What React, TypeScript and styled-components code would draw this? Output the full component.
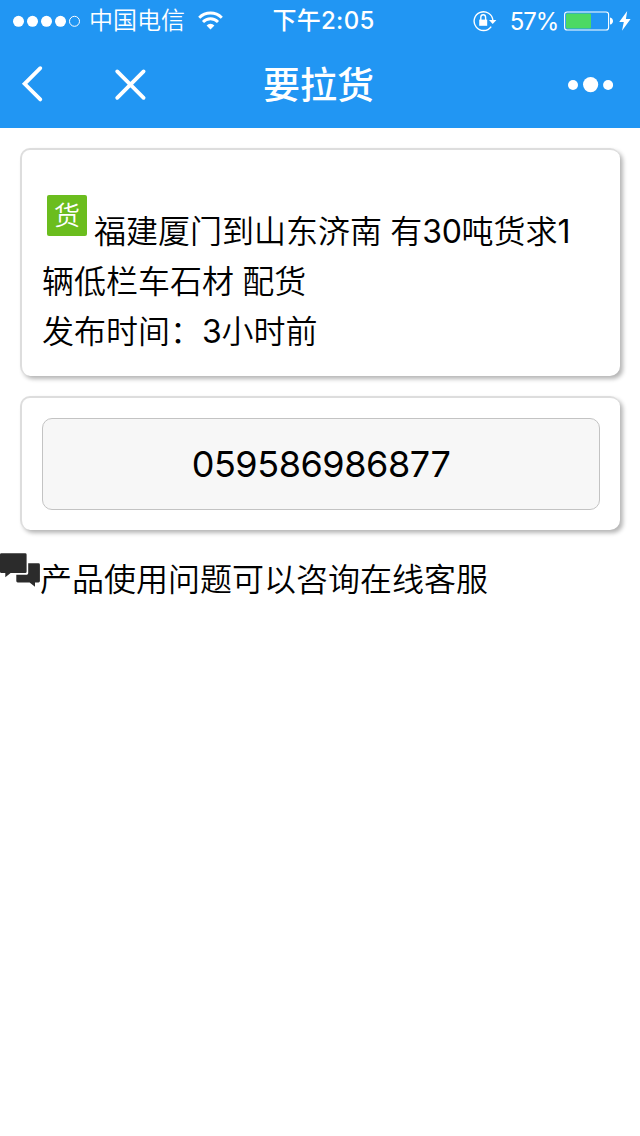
import React from "react";
import styled, { createGlobalStyle } from "styled-components";

const GlobalStyle = createGlobalStyle`
  * { box-sizing: border-box; }
  body {
    margin: 0;
    background: #fff;
    color: #000;
    font-family: Inter, "Noto Sans CJK SC", sans-serif;
    font-size: 32px;
  }
`;

const Page = styled.div`
  width: 640px;
  min-height: 1136px;
  background: #fff;
`;

const Header = styled.header`
  height: 128px;
  background: #2196f3;
  color: #fff;
`;

const StatusBar = styled.div`
  display: grid;
  grid-template-columns: 236px 1fr 236px;
  align-items: center;
  height: 40px;
`;

const StatusGroup = styled.div<{ $end?: boolean }>`
  display: flex;
  align-items: center;
  height: 40px;
  justify-content: ${(p) => (p.$end ? "flex-end" : "flex-start")};
  padding: ${(p) => (p.$end ? "0 9px 0 0" : "0 0 0 12px")};
`;

const Carrier = styled.span`
  padding-top: 1px;
  margin: 0 13px 0 8px;
  font-size: 24px;
  line-height: 40px;
  font-weight: 350;
  white-space: nowrap;
`;

const Clock = styled.span`
  padding: 1px 0 0 7px;
  font-size: 24px;
  line-height: 40px;
  text-align: center;
  font-weight: 500;
  letter-spacing: 0.3px;
  white-space: nowrap;
`;

const Percent = styled.span`
  padding-top: 2px;
  margin: 0 6px 0 13px;
  font-size: 24px;
  line-height: 40px;
  letter-spacing: -1.2px;
`;

const NavBar = styled.div`
  display: grid;
  grid-template-columns: 236px 1fr 236px;
  align-items: center;
  height: 88px;
`;

const NavActions = styled.div<{ $end?: boolean }>`
  display: flex;
  align-items: center;
  gap: 70px;
  justify-content: ${(p) => (p.$end ? "flex-end" : "flex-start")};
  padding: ${(p) => (p.$end ? "0 26px 0 0" : "1px 0 0 20px")};
`;

const Title = styled.h1`
  margin: 0;
  padding: 2px 3px 0 0;
  font-size: 37px;
  line-height: 88px;
  height: 88px;
  font-weight: 500;
  text-align: center;
`;

const Content = styled.main`
  display: flex;
  flex-direction: column;
  gap: 20px;
  padding: 20px 20px 0;
`;

const Card = styled.section`
  border: solid #ddd;
  border-width: 2px 0 0 2px;
  border-radius: 10px;
  padding: 20px;
  background: #fff;
  box-shadow: 3px 3px 4px rgba(0, 0, 0, 0.29);
`;

const Line = styled.p`
  margin: 0;
  padding-top: 1px;
  height: 50px;
  line-height: 50px;
  font-weight: 350;
  word-spacing: -0.8px;
  white-space: nowrap;

  &:first-child {
    height: 86px;
  }
`;

const Digits = styled.span`
  font-weight: 400;
  letter-spacing: -0.3px;
`;

const CargoBadge = styled.span`
  display: inline-block;
  overflow: hidden;
  width: 40px;
  height: 41px;
  margin: 24px 7px 0 5px;
  vertical-align: 7px;
  border-radius: 2px;
  background: #6bbd1e;
  color: #fff;
  font-size: 26px;
  line-height: 42px;
  text-align: center;
`;

const PhoneButton = styled.button`
  display: block;
  width: 558px;
  height: 92px;
  padding: 0;
  border: 1px solid #c3c3c3;
  border-radius: 10px;
  background: #f7f7f7;
  color: #000;
  font-family: inherit;
  font-size: 36px;
  letter-spacing: -0.45px;
`;

const Support = styled.div`
  display: flex;
  align-items: flex-start;
  margin-top: 23px;
`;

const SupportText = styled.span`
  padding-top: 2px;
  line-height: 50px;
  font-weight: 350;
`;

const SignalDots = () => (
  <svg width="69" height="12" viewBox="0 0 69 12" fill="#fff">
    <circle cx="6.5" cy="6.3" r="5.5" />
    <circle cx="20.5" cy="6.3" r="5.5" />
    <circle cx="34.5" cy="6.3" r="5.5" />
    <circle cx="48.5" cy="6.3" r="5.5" />
    <circle cx="62.5" cy="6.3" r="5" fill="none" stroke="#fff" />
  </svg>
);

const Wifi = () => (
  <svg width="25" height="20" viewBox="0 0 25 20" fill="none" stroke="#fff" strokeWidth="2.9">
    <path d="M1.2 6.7a16 16 0 0 1 22.6 0" />
    <path d="M5 10.9a10.6 10.6 0 0 1 15 0" />
    <path d="M12.5 18.4 8.6 14.4a5.6 5.6 0 0 1 7.8 0z" fill="#fff" stroke="none" />
  </svg>
);

const RotationLock = () => (
  <svg width="24" height="22" viewBox="0 0 24 22" fill="none" stroke="#fff">
    <path d="M18.2 16.6A9.4 9.4 0 1 1 19.9 10.5" strokeWidth="1.4" />
    <path d="M16 9.9h7.4l-3.7 4z" fill="#fff" stroke="none" />
    <rect x="6.2" y="9.6" width="8" height="6.2" fill="#fff" stroke="none" />
    <path d="M7.8 10V7.5a2.4 2.7 0 0 1 4.8 0V10" strokeWidth="1.4" />
  </svg>
);

const Battery = () => (
  <svg width="49" height="20" viewBox="0 0 49 20">
    <rect x=".6" y="1" width="44" height="18" rx="2.6" fill="none" stroke="#fff" strokeWidth="1.1" />
    <rect x="2" y="2.5" width="25" height="15" rx="1" fill="#4cd964" />
    <path d="M46 6.4c4 .6 4 6.6 0 7.2z" fill="#fff" />
  </svg>
);

const Bolt = () => (
  <svg width="12" height="20" viewBox="0 0 12 20">
    <path d="M8.2 0 .2 11h4.6L3 19.8 11.6 8H6.9z" fill="#fff" />
  </svg>
);

const BoltSlot = styled.span`
  display: flex;
  margin-left: 6px;
`;

const BackIcon = () => (
  <svg width="24" height="40" viewBox="0 0 24 40" fill="none" stroke="#fff" strokeWidth="3.8" strokeLinecap="round" strokeLinejoin="miter">
    <path d="M20.3 3.2 4.6 18.8 20.3 34.4" />
  </svg>
);

const CloseIcon = () => (
  <svg width="34" height="34" viewBox="0 0 34 34" fill="none" stroke="#fff" strokeWidth="3.8" strokeLinecap="round">
    <path d="m3.2 3.4 26.4 26.4m0-26.4-26.4 26.4" />
  </svg>
);

const MoreIcon = () => (
  <svg width="46" height="18" viewBox="0 0 46 18" fill="#fff">
    <circle cx="5" cy="10" r="5" />
    <circle cx="22.6" cy="9.6" r="7.6" />
    <circle cx="40.1" cy="10" r="5" />
  </svg>
);

const ChatIcon = () => (
  <svg width="40" height="34" viewBox="0 0 40 34" fill="#2b2b2b">
    <path d="M28.2 10.3H38.5a1.4 1.4 0 0 1 1.4 1.4V28a1.4 1.4 0 0 1-1.4 1.4H35V33.7L29.6 29.4H17.7a1.4 1.4 0 0 1-1.4-1.4V21.7H26.8a1.4 1.4 0 0 0 1.4-1.4z" />
    <path d="M1.4.2H25.2a1.4 1.4 0 0 1 1.4 1.4V18.7a1.4 1.4 0 0 1-1.4 1.4H10.6L5.3 24.3V20.1H1.4A1.4 1.4 0 0 1 0 18.7V1.6A1.4 1.4 0 0 1 1.4.2z" />
  </svg>
);

export default function App() {
  return (
    <Page>
      <GlobalStyle />
      <Header>
        <StatusBar>
          <StatusGroup>
            <SignalDots />
            <Carrier>中国电信</Carrier>
            <Wifi />
          </StatusGroup>
          <Clock>下午2:05</Clock>
          <StatusGroup $end>
            <RotationLock />
            <Percent>57%</Percent>
            <Battery />
            <BoltSlot>
              <Bolt />
            </BoltSlot>
          </StatusGroup>
        </StatusBar>
        <NavBar>
          <NavActions>
            <BackIcon />
            <CloseIcon />
          </NavActions>
          <Title>要拉货</Title>
          <NavActions $end>
            <MoreIcon />
          </NavActions>
        </NavBar>
      </Header>
      <Content>
        <Card>
          <Line>
            <CargoBadge>货</CargoBadge>福建厦门到山东济南 有<Digits>30</Digits>吨货求<Digits>1</Digits>
          </Line>
          <Line>辆低栏车石材 配货</Line>
          <Line>
            发布时间：<Digits>3</Digits>小时前
          </Line>
        </Card>
        <Card>
          <PhoneButton>059586986877</PhoneButton>
        </Card>
      </Content>
      <Support>
        <ChatIcon />
        <SupportText>产品使用问题可以咨询在线客服</SupportText>
      </Support>
    </Page>
  );
}
